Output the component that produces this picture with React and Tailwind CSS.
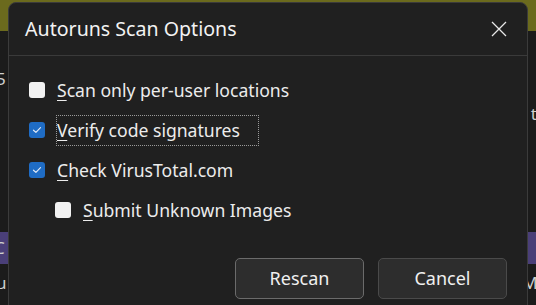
import React from 'react';

const options = [
  { key: 'S', rest: 'can only per-user locations', checked: false, indent: false },
  { key: 'V', rest: 'erify code signatures', checked: true, indent: false, focused: true },
  { key: 'C', rest: 'heck VirusTotal.com', checked: true, indent: false },
  { key: 'S', rest: 'ubmit Unknown Images', checked: false, indent: true },
];

const Checkbox = ({ checked }) =>
  checked ? (
    <span className="flex h-[16px] w-[16px] shrink-0 items-center justify-center rounded-[3px] bg-[#1f6cc4]">
      <svg width="10" height="8" viewBox="0 0 10 8" fill="none">
        <path d="M1.5 4.2 L3.9 6.4 L8.5 1.6" stroke="#dfe9f6" strokeWidth="1.2" strokeLinecap="round" strokeLinejoin="round" />
      </svg>
    </span>
  ) : (
    <span className="block h-[16px] w-[16px] shrink-0 rounded-[3px] bg-[#f2f2f2]" />
  );

const App = () => {
  return (
    <div className="relative h-[305px] w-[536px] overflow-hidden bg-[#1b1b1b] font-['Noto_Sans','Open_Sans',sans-serif]">
      {/* main window behind the dialog */}
      <div className="flex h-full w-full flex-col text-[17px] leading-[20px] text-[#cfcfcf]">
        <div className="h-[31px] shrink-0 bg-[#6b6a1d]" />
        <div className="flex h-[201px] justify-between">
          <span className="ml-[-4px] mt-[38px]">5</span>
          <span className="mr-[-1px] mt-[73px]">t</span>
        </div>
        <div className="flex h-[32px] items-center bg-[#4a3f78]">
          <span className="ml-[-6px]">C</span>
        </div>
        <div className="flex justify-between pt-[9px]">
          <span className="ml-[-4px]">u</span>
          <span className="mr-[-12px]">Mo</span>
        </div>
      </div>

      {/* dialog */}
      <div className="absolute left-[8px] top-[2px] h-[320px] w-[520px] rounded-t-[8px] border border-[#3b3b3b] bg-[#202020]">
        <div className="flex h-[53px] items-center justify-between border-b border-[#3a3a3a] pl-[16px] pr-[20px]">
          <span className="text-[19.6px] text-[#f2f2f2]">Autoruns Scan Options</span>
          <svg width="16" height="16" viewBox="0 0 16 16">
            <path d="M1 1 L15 15 M15 1 L1 15" stroke="#e8e8e8" strokeWidth="1.3" />
          </svg>
        </div>

        <div className="flex flex-col pt-[14px]">
          {options.map((opt, i) => (
            <div
              key={i}
              className={`flex h-[40px] items-center gap-[11px] ${opt.indent ? 'pl-[46px]' : 'pl-[20px]'}`}
            >
              <Checkbox checked={opt.checked} />
              <span
                className={`whitespace-nowrap text-[17.6px] leading-[29px] text-[#ececec] ${
                  opt.focused ? 'border border-dotted border-[#9a9a9a] pr-[18px]' : 'border border-transparent'
                }`}
              >
                <span className="underline decoration-1 underline-offset-[3px]">{opt.key}</span>
                {opt.rest}
              </span>
            </div>
          ))}
        </div>

        <div className="mt-[28px] flex justify-end gap-[14px] pr-[20px]">
          <button
            type="button"
            className="h-[41px] w-[129px] rounded-[5px] border border-[#6b6b6b] bg-[#2d2d2d] text-[18px] text-[#f0f0f0]"
          >
            Rescan
          </button>
          <button
            type="button"
            className="h-[41px] w-[129px] rounded-[5px] border border-[#4a4a4a] bg-[#2d2d2d] text-[18px] text-[#f0f0f0]"
          >
            Cancel
          </button>
        </div>
      </div>
    </div>
  );
};

export default App;
